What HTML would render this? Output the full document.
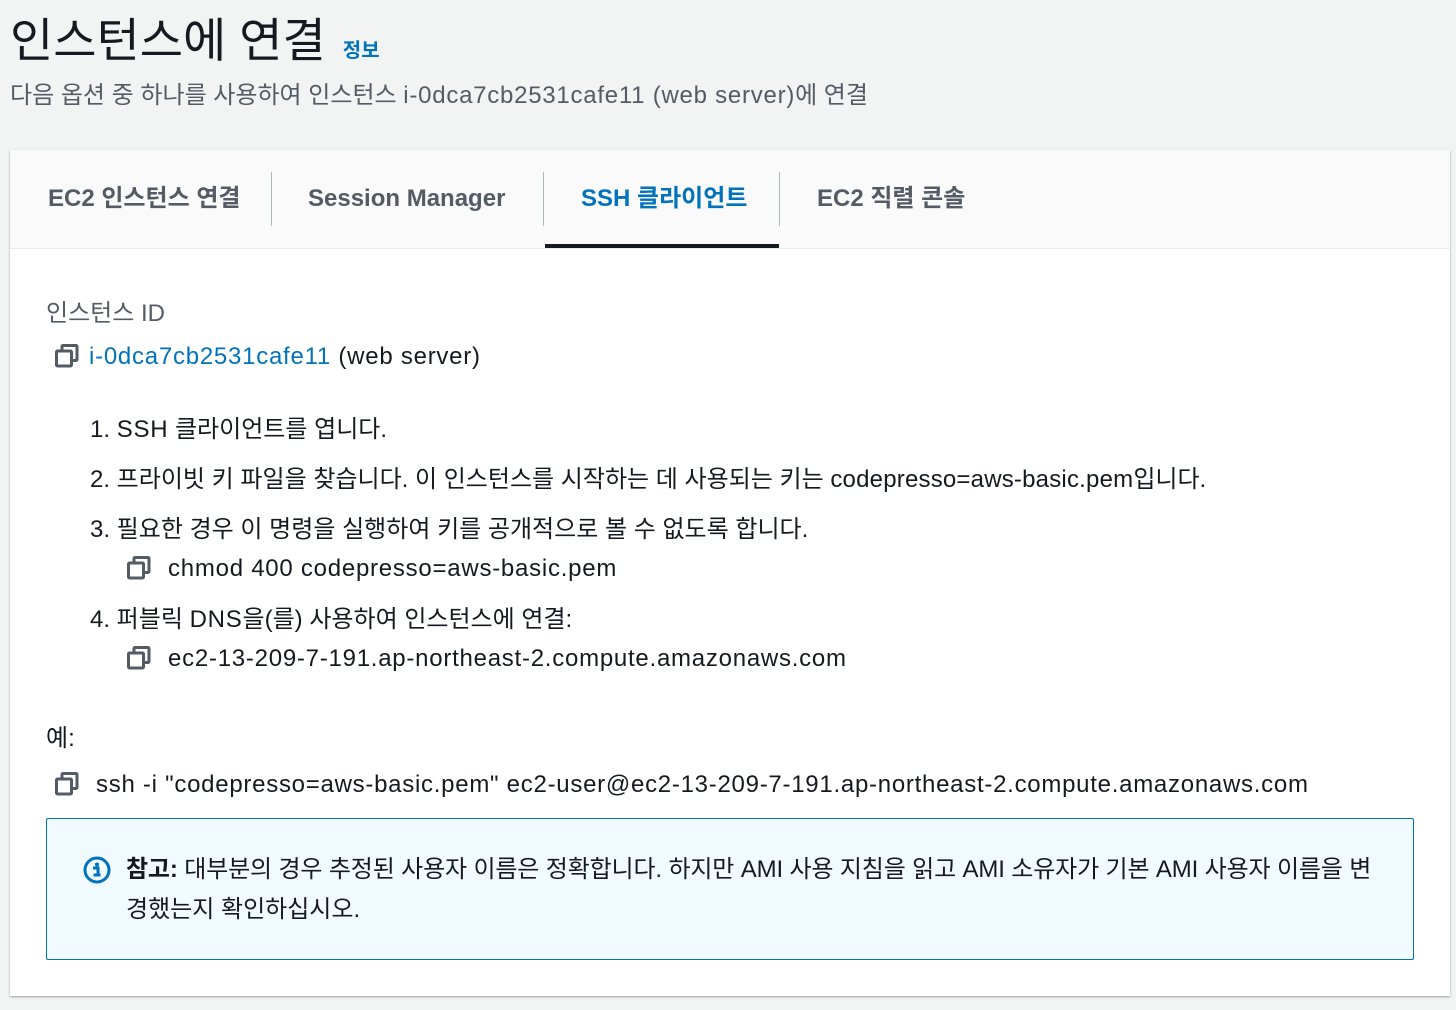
<!DOCTYPE html><html><head><meta charset="utf-8"><style>
body{margin:0;width:1456px;height:1010px;background:#f2f3f3;font-family:"Liberation Sans","Noto Sans CJK KR",sans-serif;color:#16191f;position:relative;overflow:hidden}
.a{position:absolute;white-space:nowrap}
.card{position:absolute;left:10px;top:150px;width:1440px;height:846px;background:#fff;box-shadow:0 1px 2px rgba(0,0,0,.35)}
.tabs{position:absolute;left:0;top:0;width:1440px;height:98px;background:#fafafa;border-bottom:1px solid #eaeded}
.tab{position:absolute;top:0;height:98px;line-height:98px;font-size:24px;font-weight:bold;color:#545b64}
.sep{position:absolute;top:22px;width:1px;height:54px;background:#aab7b8}
.t{font-size:24px}
.l{letter-spacing:0.75px}
svg{position:absolute}
</style></head><body>
<div class="a" style="left:10px;top:2px;font-size:47px;color:#16191f">인스턴스에 연결 <span style="font-size:20px;color:#0073bb;font-weight:bold;margin-left:4px">정보</span></div>
<div class="a t" style="left:10px;top:75px;color:#545b64">다음 옵션 중 하나를 사용하여 인스턴스 <span class="l">i-0dca7cb2531cafe11 (web server)</span>에 연결</div>
<div class="card">
<div class="tabs">
<div class="tab" style="left:38px">EC2 인스턴스 연결</div>
<div class="sep" style="left:261px"></div>
<div class="tab" style="left:298px">Session Manager</div>
<div class="sep" style="left:533px"></div>
<div class="tab" style="left:571px;color:#0073bb">SSH 클라이언트</div>
<div style="position:absolute;left:535px;top:94px;width:234px;height:4px;background:#16191f"></div>
<div class="sep" style="left:769px"></div>
<div class="tab" style="left:807px">EC2 직렬 콘솔</div>
</div>
</div>
<svg width="0" height="0"><defs><g id="cp"><rect x="7" y="1.5" width="15" height="15" rx="1" fill="none" stroke="#545b64" stroke-width="3"/><rect x="1.5" y="7" width="15" height="15" rx="1" fill="#fff" stroke="#545b64" stroke-width="3"/></g></defs></svg>
<div class="a t" style="left:46px;top:293px;color:#545b64">인스턴스 ID</div>
<svg style="left:55px;top:344px" width="24" height="24"><use href="#cp"/></svg>
<div class="a t l" style="left:89px;top:343px"><span style="color:#0073bb">i-0dca7cb2531cafe11</span> (web server)</div>
<div class="a t" style="left:90px;top:409px">1. <span class="l">SSH</span> 클라이언트를 엽니다.</div>
<div class="a t" style="left:90px;top:459px">2. 프라이빗 키 파일을 찾습니다. 이 인스턴스를 시작하는 데 사용되는 키는 <span style="letter-spacing:0.2px">codepresso=aws-basic.pem</span>입니다.</div>
<div class="a t" style="left:90px;top:509px">3. 필요한 경우 이 명령을 실행하여 키를 공개적으로 볼 수 없도록 합니다.</div>
<svg style="left:127px;top:556px" width="24" height="24"><use href="#cp"/></svg>
<div class="a t l" style="left:168px;top:555px">chmod 400 codepresso=aws-basic.pem</div>
<div class="a t" style="left:90px;top:599px">4. 퍼블릭 <span class="l">DNS</span>을(를) 사용하여 인스턴스에 연결:</div>
<svg style="left:127px;top:646px" width="24" height="24"><use href="#cp"/></svg>
<div class="a t l" style="left:168px;top:645px">ec2-13-209-7-191.ap-northeast-2.compute.amazonaws.com</div>
<div class="a t" style="left:46px;top:718px">예:</div>
<svg style="left:55px;top:772px" width="24" height="24"><use href="#cp"/></svg>
<div class="a t" style="left:96px;top:771px;letter-spacing:0.73px">ssh -i "codepresso=aws-basic.pem" ec2-user@ec2-13-209-7-191.ap-northeast-2.compute.amazonaws.com</div>
<div style="position:absolute;left:46px;top:818px;width:1366px;height:140px;background:#f1faff;border:1px solid #0073bb;border-radius:2px"></div>
<svg style="left:82px;top:855px" width="30" height="30" viewBox="0 0 30 30"><circle cx="15" cy="15" r="12" fill="none" stroke="#0073bb" stroke-width="3"/><circle cx="15" cy="9.5" r="2" fill="#0073bb"/><path d="M11 13h5v7h2.5M11.5 20h7" stroke="#0073bb" stroke-width="3" fill="none"/></svg>
<div class="a t" style="left:126px;top:849px;letter-spacing:-0.15px"><b>참고:</b> 대부분의 경우 추정된 사용자 이름은 정확합니다. 하지만 AMI 사용 지침을 읽고 AMI 소유자가 기본 AMI 사용자 이름을 변</div>
<div class="a t" style="left:126px;top:889px">경했는지 확인하십시오.</div>
</body></html>
